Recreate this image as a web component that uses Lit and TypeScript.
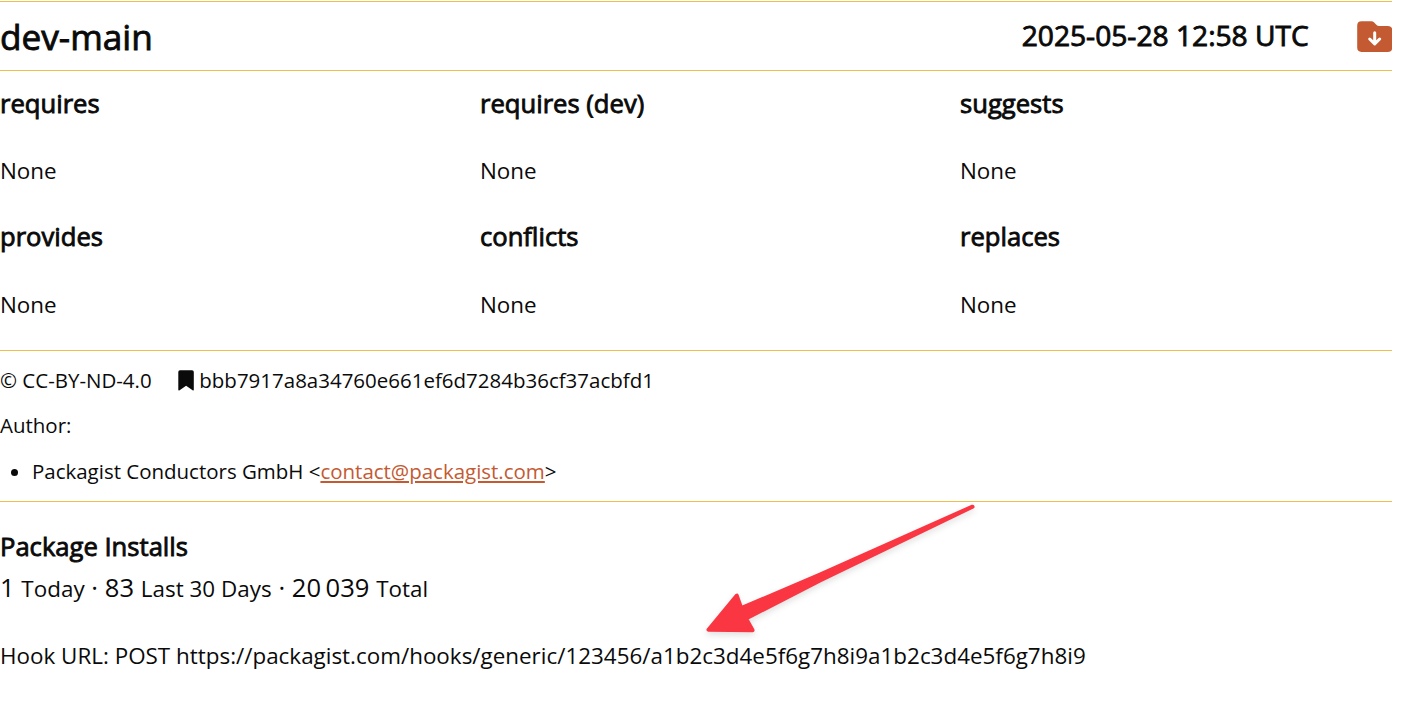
import { LitElement, html, css } from "lit";
import { customElement } from "lit/decorators.js";

const LINKS = ["requires", "requires (dev)", "suggests", "provides", "conflicts", "replaces"];

@customElement("app-root")
class AppRoot extends LitElement {
  static styles = css`
    :host {
      display: block;
      position: relative;
      box-sizing: border-box;
      width: 1392px;
      padding-top: 1px;
      color: #0a0a0a;
      background: #fff;
      font: 22.4px/34px "Open Sans", sans-serif;
    }
    h1, h2, h3, p, ul { margin: 0; padding: 0; font-weight: 400; }
    h1, h3, .date { -webkit-text-stroke: 0.85px currentColor; }
    .head {
      box-sizing: border-box;
      height: 70px;
      border: solid #efbe4d;
      border-width: 1px 0;
      display: flex;
      align-items: center;
    }
    h1 { flex: 1; font-size: 35.2px; line-height: 48px; padding-bottom: 1px; }
    .date { font-size: 28.16px; line-height: 40px; padding-bottom: 3px; }
    .folder { display: block; width: 35.2px; height: 31px; margin-left: 48px; padding-top: 1px; }
    .details {
      box-sizing: border-box;
      height: 280px;
      padding-top: 13.6px;
      border-bottom: 1px solid #efbe4d;
      display: grid;
      grid-template-columns: repeat(3, 432px);
      grid-auto-rows: 133.4px;
      column-gap: 48px;
    }
    h3 { font-size: 25.6px; line-height: 38px; }
    .details p { margin-top: 31.8px; }
    .meta {
      box-sizing: border-box;
      height: 151px;
      padding-top: 14.4px;
      border-bottom: 1px solid #efbe4d;
      display: flex;
      flex-direction: column;
      gap: 15px;
      font-size: 20.48px;
      line-height: 30px;
    }
    .license { display: flex; align-items: center; }
    .bookmark { width: 16px; height: 21px; margin: 0 5.4px 0 26.3px; }
    .sha { letter-spacing: 0.01px; }
    ul { padding: 1px 0 0 32px; }
    a { color: #c45a32; text-decoration: underline; }
    .installs { padding-top: 26px; }
    .counts { margin-top: 5px; font-size: 25.6px; letter-spacing: 0.03px; }
    .counts span { font-size: 22.4px; }
    .hook { margin-top: 33px; white-space: nowrap; letter-spacing: 0.01px; }
    .arrow {
      position: absolute;
      left: 690px;
      top: 495px;
      width: 300px;
      height: 150px;
      filter: drop-shadow(0 3px 3px rgba(0, 0, 0, 0.12));
    }
  `;

  render() {
    return html`
      <header class="head">
        <h1>dev-main</h1>
        <div class="date">2025-05-28 12:58 UTC</div>
        <svg class="folder" viewBox="0 0 35.2 31">
          <path fill="#c45a32" d="M4.5 .3H14.2Q16 .3 17.2 1.5L19.3 3.7Q20.5 4.9 22.2 4.9H30.9Q35.2 4.9 35.2 9.2V26.6Q35.2 30.9 30.9 30.9H4.5Q.2 30.9 .2 26.6V4.6Q.2 .3 4.5 .3Z"/>
          <path fill="none" stroke="#fff" stroke-width="3" stroke-linecap="round" stroke-linejoin="round" d="M17.7 11.8V22.5M12.7 18L17.7 22.9L22.7 18"/>
        </svg>
      </header>
      <section class="details">
        ${LINKS.map((name) => html`<div><h3>${name}</h3><p>None</p></div>`)}
      </section>
      <section class="meta">
        <div class="license">
          <span>© CC-BY-ND-4.0</span>
          <svg class="bookmark" viewBox="0 0 16 21">
            <path fill="#0a0a0a" d="M2 .3H14Q15.8 .3 15.8 2.1V19.5Q15.8 21 14.6 20.2L8.1 15.8L1.6 20.2Q.3 21 .3 19.5V2.1Q.3 .3 2 .3Z"/>
          </svg>
          <span class="sha">bbb7917a8a34760e661ef6d7284b36cf37acbfd1</span>
        </div>
        <p>Author:</p>
        <ul>
          <li>Packagist Conductors GmbH &lt;<a href="mailto:contact@packagist.com">contact@packagist.com</a>&gt;</li>
        </ul>
      </section>
      <section class="installs">
        <h3>Package Installs</h3>
        <p class="counts">1 <span>Today</span> · 83 <span>Last 30 Days</span> · 20&thinsp;039 <span>Total</span></p>
        <p class="hook">Hook URL: POST https://packagist.com/hooks/generic/123456/a1b2c3d4e5f6g7h8i9a1b2c3d4e5f6g7h8i9</p>
      </section>
      <svg class="arrow" viewBox="690 495 300 150">
        <path fill="#fa3643" stroke="#fa3643" stroke-width="4" stroke-linejoin="round"
          d="M972.5 506.7L820 574.5L741.2 608.2L736.8 595.6L708.5 629.7L752.6 630.2L746 618.5L820 580.5Z"/>
      </svg>
    `;
  }
}
